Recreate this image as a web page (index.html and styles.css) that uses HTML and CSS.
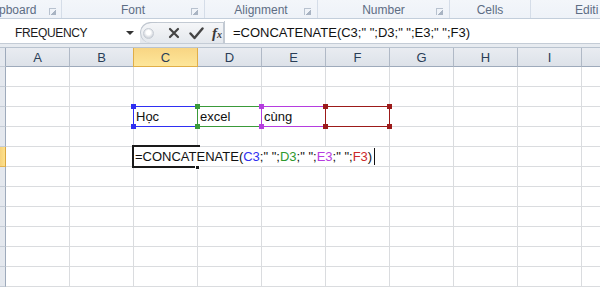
FILE: index.html
```html
<!DOCTYPE html>
<html>
<head>
<meta charset="utf-8">
<link rel="stylesheet" href="styles.css">
</head>
<body>
<div class="ribbon">
  <div class="grp g-clip"><span class="lbl">pboard</span><span class="launch"></span></div>
  <div class="grp g-font"><span class="lbl">Font</span><span class="launch"></span></div>
  <div class="grp g-align"><span class="lbl">Alignment</span><span class="launch"></span></div>
  <div class="grp g-num"><span class="lbl">Number</span><span class="launch"></span></div>
  <div class="grp g-cells"><span class="lbl">Cells</span></div>
  <div class="grp g-edit"><span class="lbl">Editi</span></div>
</div>
<div class="fbar">
  <div class="namebox">
    <span class="nametext">FREQUENCY</span>
    <span class="dd"></span>
  </div>
  <div class="btns">
    <span class="knob"></span>
    <svg class="ico" width="12" height="12" viewBox="0 0 12 12"><path d="M2 2 L10 10 M10 2 L2 10" stroke="#444" stroke-width="2.2" stroke-linecap="round"/></svg>
    <svg class="ico" width="15" height="13" viewBox="0 0 15 13"><path d="M1.5 6.5 L5.5 11 L13.5 1.5" stroke="#444" stroke-width="2.4" fill="none" stroke-linecap="round" stroke-linejoin="round"/></svg>
    <span class="fx">f<span class="fxx">x</span></span>
  </div>
  <div class="finput">=CONCATENATE(C3;" ";D3;" ";E3;" ";F3)</div>
</div>
<div class="strip"></div>
<div class="sheet">
  <div class="row head">
    <div class="rh"></div>
    <div class="ch">A</div><div class="ch">B</div><div class="ch sel">C</div><div class="ch">D</div><div class="ch">E</div><div class="ch">F</div><div class="ch">G</div><div class="ch">H</div><div class="ch">I</div><div class="ch last"></div>
  </div>
  <div class="row"><div class="rh"></div><div class="c"></div><div class="c"></div><div class="c"></div><div class="c"></div><div class="c"></div><div class="c"></div><div class="c"></div><div class="c"></div><div class="c"></div><div class="c last"></div></div>
  <div class="row"><div class="rh"></div><div class="c"></div><div class="c"></div><div class="c"></div><div class="c"></div><div class="c"></div><div class="c"></div><div class="c"></div><div class="c"></div><div class="c"></div><div class="c last"></div></div>
  <div class="row">
    <div class="rh"></div><div class="c"></div><div class="c"></div>
    <div class="c ref blue"><span class="txt">Học</span><i class="h tl"></i><i class="h tr"></i><i class="h bl"></i><i class="h br"></i></div>
    <div class="c ref green"><span class="txt">excel</span><i class="h tl"></i><i class="h tr"></i><i class="h bl"></i><i class="h br"></i></div>
    <div class="c ref purple"><span class="txt">cùng</span><i class="h tl"></i><i class="h tr"></i><i class="h bl"></i><i class="h br"></i></div>
    <div class="c ref red"><i class="h tl"></i><i class="h tr"></i><i class="h bl"></i><i class="h br"></i></div>
    <div class="c"></div><div class="c"></div><div class="c"></div><div class="c last"></div>
  </div>
  <div class="row"><div class="rh"></div><div class="c"></div><div class="c"></div><div class="c"></div><div class="c"></div><div class="c"></div><div class="c"></div><div class="c"></div><div class="c"></div><div class="c"></div><div class="c last"></div></div>
  <div class="row">
    <div class="rh sel"></div><div class="c"></div><div class="c"></div>
    <div class="c active"><span class="edit">=CONCATENATE(<b class="kb">C3</b>;" ";<b class="kg">D3</b>;" ";<b class="kp">E3</b>;" ";<b class="kr">F3</b>)<span class="caret"></span></span><i class="fill"></i></div>
    <div class="c nob"></div><div class="c nob"></div><div class="c"></div>
    <div class="c"></div><div class="c"></div><div class="c"></div><div class="c last"></div>
  </div>
  <div class="row"><div class="rh"></div><div class="c"></div><div class="c"></div><div class="c"></div><div class="c"></div><div class="c"></div><div class="c"></div><div class="c"></div><div class="c"></div><div class="c"></div><div class="c last"></div></div>
  <div class="row"><div class="rh"></div><div class="c"></div><div class="c"></div><div class="c"></div><div class="c"></div><div class="c"></div><div class="c"></div><div class="c"></div><div class="c"></div><div class="c"></div><div class="c last"></div></div>
  <div class="row"><div class="rh"></div><div class="c"></div><div class="c"></div><div class="c"></div><div class="c"></div><div class="c"></div><div class="c"></div><div class="c"></div><div class="c"></div><div class="c"></div><div class="c last"></div></div>
  <div class="row"><div class="rh"></div><div class="c"></div><div class="c"></div><div class="c"></div><div class="c"></div><div class="c"></div><div class="c"></div><div class="c"></div><div class="c"></div><div class="c"></div><div class="c last"></div></div>
  <div class="row"><div class="rh"></div><div class="c"></div><div class="c"></div><div class="c"></div><div class="c"></div><div class="c"></div><div class="c"></div><div class="c"></div><div class="c"></div><div class="c"></div><div class="c last"></div></div>
  <div class="row"><div class="rh"></div><div class="c"></div><div class="c"></div><div class="c"></div><div class="c"></div><div class="c"></div><div class="c"></div><div class="c"></div><div class="c"></div><div class="c"></div><div class="c last"></div></div>
</div>
</body>
</html>
```
FILE: styles.css
```css
* { box-sizing: border-box; }
html, body { margin: 0; padding: 0; }
body {
  width: 600px; height: 301px; overflow: hidden;
  background: #ffffff;
  font-family: "Liberation Sans", Arial, sans-serif;
}
.ribbon {
  display: flex; height: 19px;
  background: linear-gradient(#f3f6fa, #eef2f8);
  border-bottom: 1px solid #c3cedb;
}
.grp {
  position: relative;
  display: flex; align-items: flex-start; justify-content: center;
  border-right: 1px solid #d5dde8;
  font-size: 12px; color: #5d6d84;
  padding-top: 3px;
}
.g-clip { width: 62px; justify-content: flex-start; }
.g-clip .lbl { margin-left: -1px; }
.g-font { width: 143px; }
.g-align { width: 113px; }
.g-num { width: 132px; }
.g-cells { width: 81px; }
.g-edit { width: 69px; border-right: none; justify-content: flex-start; padding-left: 44px; }
.lbl { line-height: 15px; }
.launch {
  position: absolute; right: 6px; top: 8px;
  width: 7px; height: 7px;
  border-left: 1px solid #b8c2cf; border-top: 1px solid #b8c2cf;
  background: linear-gradient(135deg, transparent 55%, #a9b4c3 56%);
}
.g-clip .launch { right: 5px; }
.fbar {
  display: flex; height: 25px;
  background: #ffffff;
  border-bottom: 1px solid #c4ccd6;
  padding-top: 2px;
}
.namebox {
  width: 140px; position: relative;
  display: flex; align-items: center;
  background: #fff;
}
.nametext { margin-left: 15px; font-size: 12px; letter-spacing: -0.35px; color: #1b1b1b; margin-top: 1px; }
.dd {
  position: absolute; left: 126px; top: 10px;
  width: 0; height: 0;
  border-left: 4px solid transparent; border-right: 4px solid transparent;
  border-top: 4px solid #333;
}
.btns {
  width: 84px; display: flex; align-items: center; gap: 9px;
  padding-left: 3px;
  background: linear-gradient(#f5f6f8, #e4e8ed);
  border: 1px solid #c3cad3; border-left: none; border-bottom: none;
  border-radius: 12px 0 0 0;
  position: relative;
  margin-top: 1px;
}
.btns::before {
  content: ""; position: absolute; left: 0; top: -1px; bottom: 0; width: 16px;
  border: 1px solid #bfc6cf; border-right: none; border-bottom: none; border-radius: 12px 0 0 12px;
}
.knob {
  width: 11px; height: 11px; border-radius: 50%;
  background: radial-gradient(circle at 50% 40%, #ffffff 0 30%, #d4d8de 70%);
  border: 1px solid #c6ccd4;
  margin-right: 5px;
}
.ico { display: block; }
.fx {
  font-family: "Liberation Serif", "Times New Roman", serif;
  font-style: italic; font-weight: bold; font-size: 15px; color: #3a3a3a;
  margin-left: -1px;
}
.fxx { font-size: 10px; }
.finput {
  flex: 1; display: flex; align-items: center;
  padding-left: 8px;
  border-left: 1px solid #c3cad3;
  font-size: 13px; color: #111;
}
.strip {
  height: 4px;
  background: #e7ebf0;
  border-bottom: 1px solid #b9c3cf;
}
.sheet { display: flex; flex-direction: column; }
.row {
  display: grid;
  grid-template-columns: 6px repeat(9, 64px) 1fr;
  height: 20px;
}
.row.head { height: 19px; }
.rh {
  background: #e4e8ee;
  border-right: 1px solid #9eaabb;
  border-bottom: 1px solid #c5ccd6;
}
.rh.sel { background: linear-gradient(90deg, #f7d27b, #fde18c); border-right-color: #d9a640; border-bottom-color: #e3b452; }
.ch {
  background: linear-gradient(#e9ecf1, #dde2e9);
  border-right: 1px solid #b0b9c6;
  border-bottom: 1px solid #9eaabb;
  display: flex; align-items: center; justify-content: center;
  font-size: 13px; color: #2a3e57;
}
.ch.sel {
  background: linear-gradient(#f8d583, #fde69a);
  border-right-color: #e0ae48; border-bottom-color: #e0ae48;
  box-shadow: -1px 0 0 #e0ae48;
}
.ch.last { border-right: none; }
.c {
  position: relative;
  border-right: 1px solid #dadcdf;
  border-bottom: 1px solid #dadcdf;
  font-size: 13px; color: #111;
}
.c.last { border-right: none; }
.c.nob { border-right-color: transparent; }
.txt { position: absolute; left: 2px; top: 2px; line-height: 16px; }
.ref::before {
  content: ""; position: absolute; left: -1px; top: -1px; right: -1px; bottom: -1px;
  border: 1px solid currentColor;
}
.ref .txt { color: #111; }
.h { position: absolute; width: 5px; height: 5px; background: currentColor; z-index: 2; }
.h.tl { left: -3px; top: -3px; }
.h.tr { right: -3px; top: -3px; }
.h.bl { left: -3px; bottom: -3px; }
.h.br { right: -3px; bottom: -3px; }
.blue { color: #2f2ff2; }
.green { color: #3a9a3a; }
.purple { color: #b53ddf; }
.red { color: #9c1a1a; }
.active { z-index: 3; border-color: transparent; }
.active::before {
  content: ""; position: absolute; left: -2px; top: -2px; width: 66px; bottom: -2px;
  border: 2px solid #1a1a1a; border-right: none;
}
.edit {
  position: absolute; left: 1px; top: 1px;
  white-space: nowrap; line-height: 17px;
  background: #fff; padding-right: 2px;
  font-size: 13px; color: #111;
  display: flex; align-items: center;
}
.edit b { font-weight: normal; }
.kb { color: #3030f0; }
.kg { color: #2e9a2e; }
.kp { color: #b63ce0; }
.kr { color: #cc2a2a; }
.caret { display: inline-block; width: 1px; height: 17px; background: #111; margin-left: 2px; }
.fill {
  position: absolute; right: -3px; bottom: -4px; width: 5px; height: 5px;
  background: #1a1a1a; border: 1px solid #fff; z-index: 4;
}
```
